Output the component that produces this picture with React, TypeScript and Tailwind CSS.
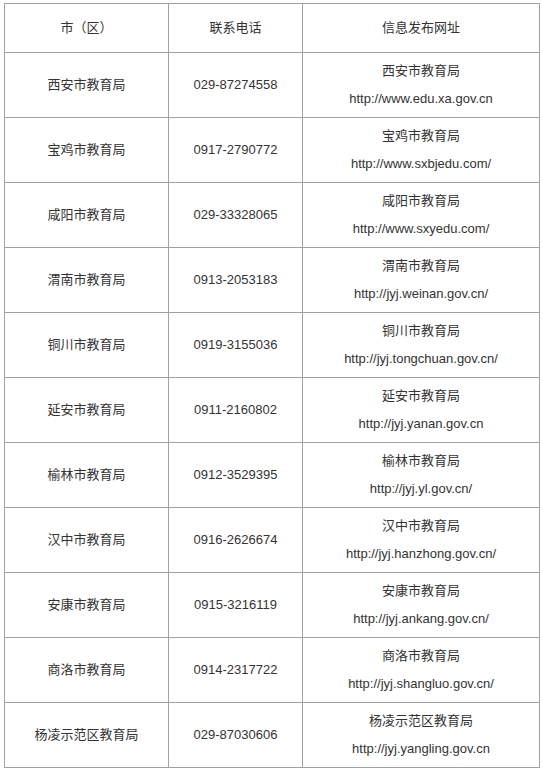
const rows = [
  { city: '西安市教育局', phone: '029-87274558', name: '西安市教育局', url: 'http://www.edu.xa.gov.cn' },
  { city: '宝鸡市教育局', phone: '0917-2790772', name: '宝鸡市教育局', url: 'http://www.sxbjedu.com/' },
  { city: '咸阳市教育局', phone: '029-33328065', name: '咸阳市教育局', url: 'http://www.sxyedu.com/' },
  { city: '渭南市教育局', phone: '0913-2053183', name: '渭南市教育局', url: 'http://jyj.weinan.gov.cn/' },
  { city: '铜川市教育局', phone: '0919-3155036', name: '铜川市教育局', url: 'http://jyj.tongchuan.gov.cn/' },
  { city: '延安市教育局', phone: '0911-2160802', name: '延安市教育局', url: 'http://jyj.yanan.gov.cn' },
  { city: '榆林市教育局', phone: '0912-3529395', name: '榆林市教育局', url: 'http://jyj.yl.gov.cn/' },
  { city: '汉中市教育局', phone: '0916-2626674', name: '汉中市教育局', url: 'http://jyj.hanzhong.gov.cn/' },
  { city: '安康市教育局', phone: '0915-3216119', name: '安康市教育局', url: 'http://jyj.ankang.gov.cn/' },
  { city: '商洛市教育局', phone: '0914-2317722', name: '商洛市教育局', url: 'http://jyj.shangluo.gov.cn/' },
  { city: '杨凌示范区教育局', phone: '029-87030606', name: '杨凌示范区教育局', url: 'http://jyj.yangling.gov.cn' },
];

const cell = 'border border-[#a0a0a8] text-center align-middle p-0';

export default function App() {
  return (
    <div
      className="bg-white pl-[4px] pt-[3px] text-[13px] text-[#333]"
      style={{ fontFamily: '"Liberation Sans", "Noto Sans CJK SC", sans-serif' }}
    >
      <table className="border-collapse table-fixed w-[535px]">
        <colgroup>
          <col className="w-[164px]" />
          <col className="w-[134px]" />
          <col className="w-[237px]" />
        </colgroup>
        <thead>
          <tr className="h-[49px]">
            <th className={cn(cell, 'font-normal')}>市（区）</th>
            <th className={cn(cell, 'font-normal')}>联系电话</th>
            <th className={cn(cell, 'font-normal')}>信息发布网址</th>
          </tr>
        </thead>
        <tbody>
          {rows.map(r => (
            <tr key={r.city} className="h-[65px]">
              <td className={cell}>{r.city}</td>
              <td className={cell}>{r.phone}</td>
              <td className={cn(cell, 'leading-[28px]')}>
                <div>{r.name}</div>
                <div>{r.url}</div>
              </td>
            </tr>
          ))}
        </tbody>
      </table>
    </div>
  );
}

function cn(...c: string[]) {
  return c.join(' ');
}
